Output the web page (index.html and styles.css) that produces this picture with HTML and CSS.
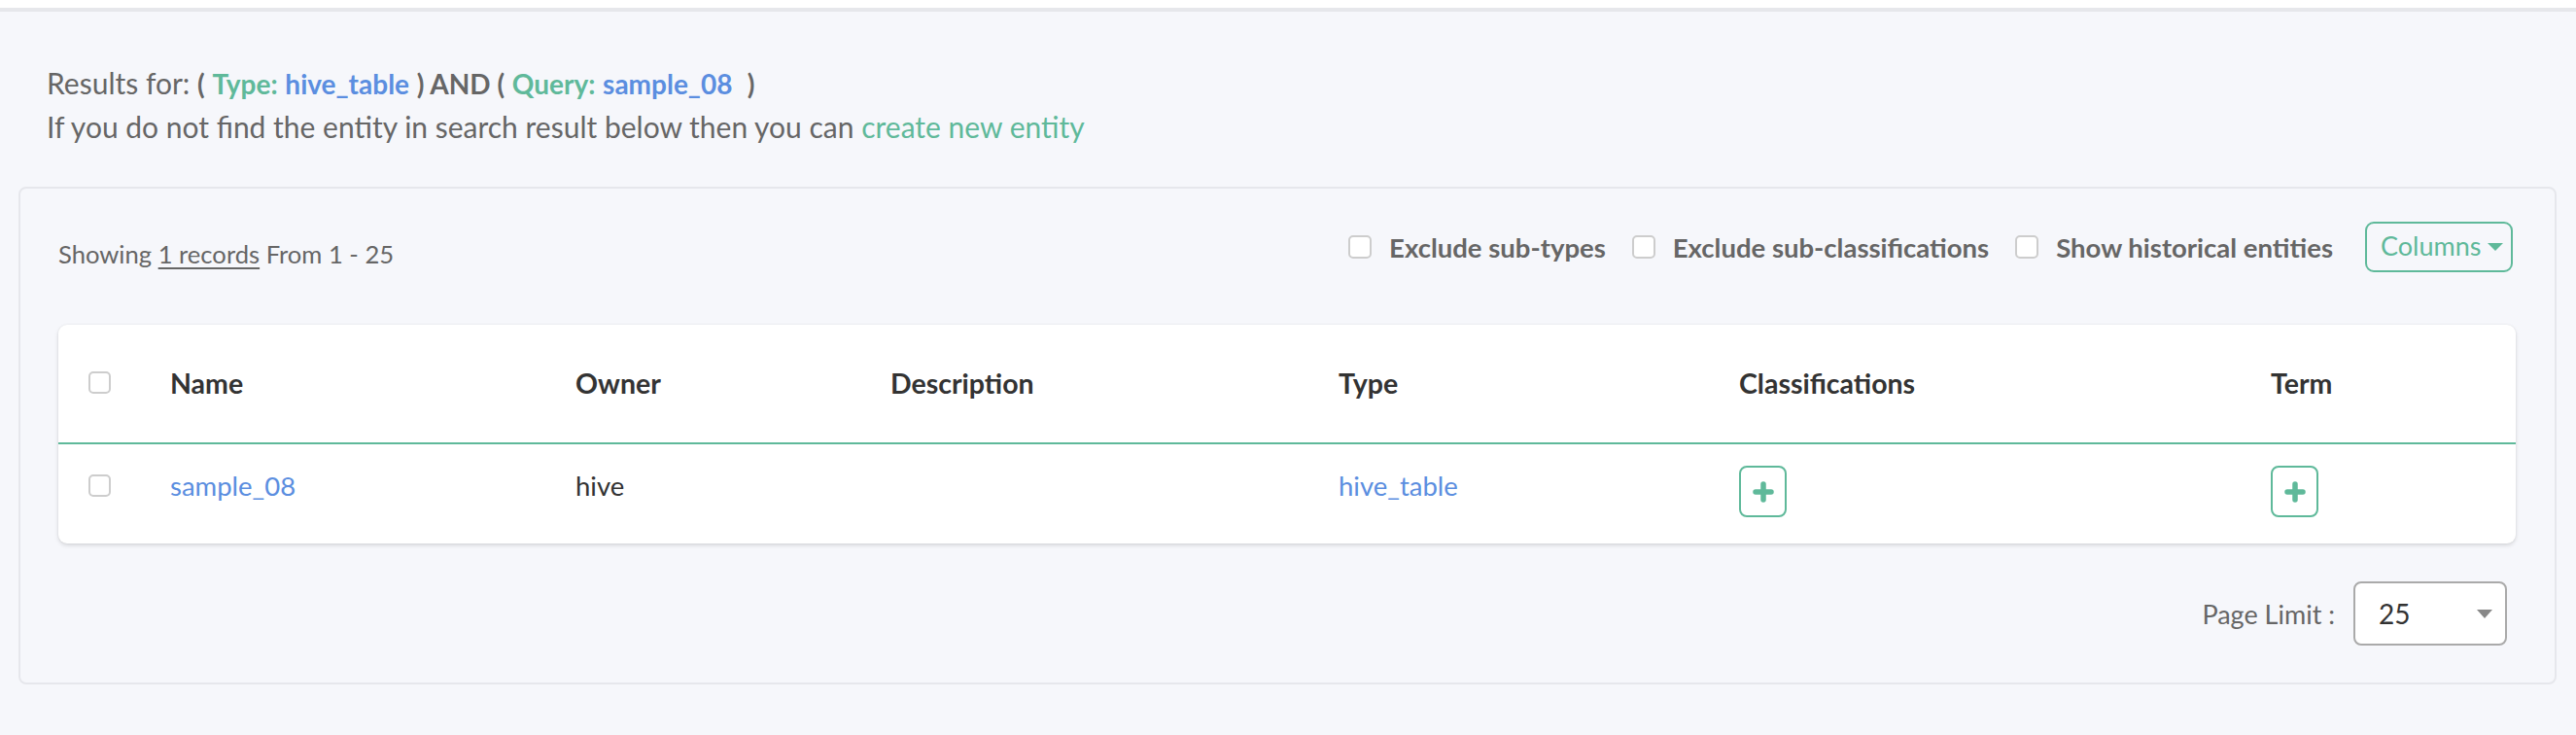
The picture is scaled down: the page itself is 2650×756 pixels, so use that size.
FILE: index.html
```html
<!DOCTYPE html>
<html lang="en">
<head>
<meta charset="utf-8">
<title>Search results</title>
<link rel="stylesheet" href="styles.css">
</head>
<body>
<div class="topbar"></div>
<main class="main">
  <section class="results">
    <p class="line">Results for: <b>(</b> <b class="green">Type:</b> <b class="blue">hive_table</b> <b>) AND (</b> <b class="green">Query:</b> <b class="blue">sample_08</b>&nbsp; <b>)</b></p>
    <p class="line">If you do not find the entity in search result below then you can <a class="green-link">create new entity</a></p>
  </section>

  <section class="panel">
    <div class="toolbar">
      <div class="showing">Showing <span class="ul">1 records</span> From 1 - 25</div>
      <div class="filters">
        <label class="chk"><span class="box"></span><span>Exclude sub-types</span></label>
        <label class="chk"><span class="box"></span><span>Exclude sub-classifications</span></label>
        <label class="chk"><span class="box"></span><span>Show historical entities</span></label>
        <button class="columns-btn">Columns<span class="caret"></span></button>
      </div>
    </div>

    <div class="card">
      <div class="row head">
        <div class="cell first"><span class="box"></span></div>
        <div class="cell">Name</div>
        <div class="cell">Owner</div>
        <div class="cell">Description</div>
        <div class="cell">Type</div>
        <div class="cell">Classifications</div>
        <div class="cell">Term</div>
      </div>
      <div class="row data">
        <div class="cell first"><span class="box"></span></div>
        <div class="cell"><a class="link">sample_08</a></div>
        <div class="cell">hive</div>
        <div class="cell"></div>
        <div class="cell"><a class="link">hive_table</a></div>
        <div class="cell"><button class="plus-btn" aria-label="Add classification"><svg viewBox="0 0 22 22" width="22" height="22"><path d="M11 3v16M3 11h16" stroke="#5fb99a" stroke-width="5.5" stroke-linecap="round" fill="none"/></svg></button></div>
        <div class="cell"><button class="plus-btn" aria-label="Add term"><svg viewBox="0 0 22 22" width="22" height="22"><path d="M11 3v16M3 11h16" stroke="#5fb99a" stroke-width="5.5" stroke-linecap="round" fill="none"/></svg></button></div>
      </div>
    </div>

    <div class="pager">
      <span class="pager-label">Page Limit :</span>
      <div class="select"><span class="select-val">25</span><span class="select-caret"></span></div>
    </div>
  </section>
</main>
</body>
</html>
```

FILE: styles.css
```css
* { box-sizing: border-box; }

body {
  margin: 0;
  background: #f6f7fb;
  font-family: Lato, "Open Sans", sans-serif;
  color: #666;
}

.topbar {
  height: 12px;
  background: #fff;
  border-bottom: 4px solid #e6e7eb;
}

.main {
  padding: 0 20px 0 19px;
}

.results {
  padding: 51px 0 0 29px;
}

.line {
  margin: 0;
  font-size: 30px;
  line-height: 44px;
  color: #666;
  white-space: nowrap;
}

.line b {
  font-weight: 700;
  font-size: 28px;
}

.green { color: #5fb99a; }
.blue { color: #5b8ee0; }
.green-link { color: #5fb99a; text-decoration: none; }

.panel {
  margin-top: 40px;
  border: 2px solid #e6e7ec;
  border-radius: 8px;
  padding: 34px 40px 38px 39px;
}

.toolbar {
  display: flex;
  justify-content: space-between;
  align-items: center;
  height: 52px;
}

.showing {
  font-size: 25.6px;
  color: #666;
  padding-top: 14px;
}

.ul {
  text-decoration: underline;
  text-decoration-thickness: 2px;
  text-underline-offset: 4px;
}

.filters {
  display: flex;
  align-items: center;
  margin-right: 3px;
}

.chk {
  display: flex;
  align-items: center;
  gap: 18px;
  margin-right: 27px;
  font-size: 27.5px;
  font-weight: 700;
  color: #666;
}

.chk:nth-of-type(3) { margin-right: 33px; }

.box {
  display: inline-block;
  width: 24px;
  height: 24px;
  border: 2px solid #cdcdcd;
  border-radius: 5px;
  background: #fff;
}

.columns-btn {
  display: flex;
  align-items: center;
  height: 52px;
  width: 152px;
  padding: 0 13px 3px 14px;
  border: 2px solid #5fb99a;
  border-radius: 9px;
  background: transparent;
  color: #5fb99a;
  font-family: Lato, "Open Sans", sans-serif;
  font-size: 27px;
}

.caret {
  margin-left: 7px;
  margin-top: 3px;
  width: 0;
  height: 0;
  border-left: 8px solid transparent;
  border-right: 8px solid transparent;
  border-top: 8px solid #5fb99a;
}

.card {
  margin-top: 54px;
  background: #fff;
  border-radius: 9px;
  box-shadow: 0 2px 4px rgba(0, 0, 0, 0.13), 0 0 2px rgba(0, 0, 0, 0.08);
}

.row {
  display: grid;
  grid-template-columns: 115px 417px 324px 461px 412px 547px 1fr;
  align-items: center;
}

.row.head {
  height: 123px;
  padding-bottom: 2px;
  border-bottom: 2px solid #5fb99a;
  font-size: 28.5px;
  font-weight: 700;
  color: #333;
}

.row.data {
  height: 102px;
  padding-bottom: 18px;
  font-size: 27.5px;
  color: #333;
}

.cell.first {
  padding-left: 31px;
  display: flex;
  align-items: center;
}

.cell.first .box {
  width: 23px;
  height: 23px;
}

.link {
  color: #5b8ee0;
  text-decoration: none;
}

.plus-btn {
  display: flex;
  align-items: center;
  justify-content: center;
  width: 49px;
  height: 53px;
  margin-top: 13px;
  padding: 0;
  border: 2px solid #5fb99a;
  border-radius: 8px;
  background: #fff;
}

.pager {
  margin-top: 39px;
  display: flex;
  justify-content: flex-end;
  align-items: center;
  gap: 19px;
  padding-right: 9px;
}

.pager-label {
  font-size: 27px;
  color: #666;
}

.select {
  display: flex;
  align-items: center;
  justify-content: space-between;
  width: 158px;
  height: 66px;
  padding: 0 13px 0 24px;
  border: 2px solid #aaa;
  border-radius: 8px;
  background: #fff;
}

.select-val {
  font-size: 28px;
  color: #333;
}

.select-caret {
  width: 0;
  height: 0;
  border-left: 8px solid transparent;
  border-right: 8px solid transparent;
  border-top: 9px solid #888;
}
```
